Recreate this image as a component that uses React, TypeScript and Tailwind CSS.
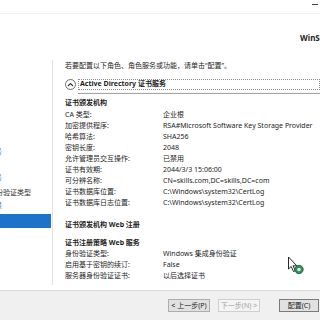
import React from 'react'

type Row = { label: string; value: string }

const caRows: Row[] = [
  { label: 'CA 类型:', value: '企业根' },
  { label: '加密提供程序:', value: 'RSA#Microsoft Software Key Storage Provider' },
  { label: '哈希算法:', value: 'SHA256' },
  { label: '密钥长度:', value: '2048' },
  { label: '允许管理员交互操作:', value: '已禁用' },
  { label: '证书有效期:', value: '2044/3/3 15:06:00' },
  { label: '可分辨名称:', value: 'CN=skills.com,DC=skills,DC=com' },
  { label: '证书数据库位置:', value: 'C:\\Windows\\system32\\CertLog' },
  { label: '证书数据库日志位置:', value: 'C:\\Windows\\system32\\CertLog' },
]

const cesRows: Row[] = [
  { label: '身份验证类型:', value: 'Windows 集成身份验证' },
  { label: '启用基于密钥的续订:', value: 'False' },
  { label: '服务器身份验证证书:', value: '以后选择证书' },
]

function DetailRow({ label, value }: Row) {
  return (
    <div className="flex h-[11px] items-center leading-[11px]">
      <div className="w-[98px] shrink-0">{label}</div>
      <div className="whitespace-nowrap">{value}</div>
    </div>
  )
}

function NavItem({ text, shift, blue }: { text: string; shift: string; blue?: boolean }) {
  return (
    <div className="h-[12px] overflow-hidden leading-[12px]">
      <div className={`whitespace-nowrap ${shift} ${blue ? 'text-[#3a7bc8]' : 'text-[#333]'}`}>{text}</div>
    </div>
  )
}

function BusyCursor() {
  return (
    <svg className="absolute left-[287px] top-[256px]" width="18" height="20" viewBox="0 0 18 20">
      <path d="M1.5 1 L1.5 13 L4.2 10.5 L6.5 15.5 L8.3 14.7 L6.1 9.8 L9.8 9.8 Z" fill="#fff" stroke="#111" strokeWidth="0.9" strokeLinejoin="round" />
      <circle cx="12" cy="13.5" r="4.2" fill="#2f8f5b" stroke="#1a5a37" strokeWidth="0.8" />
      <circle cx="12" cy="13.5" r="1.8" fill="#d7efe0" />
    </svg>
  )
}

export default function App() {
  return (
    <div
      className="relative h-[320px] w-[320px] overflow-hidden bg-white text-[7px] text-[#1e1e1e]"
      style={{ fontFamily: '"Noto Sans", "Noto Sans CJK SC", sans-serif' }}
    >
      {/* title bar */}
      <div className="flex h-[14px] justify-end border-b border-[#f0f0f0]">
        <div className="mr-[2px] mt-[4px] h-[1px] w-[6px] bg-[#444]" />
      </div>

      {/* wizard header */}
      <div className="flex h-[42px] items-end overflow-hidden pb-[13px] pl-[300px]">
        <div className="whitespace-nowrap text-[8px] font-bold leading-[10px]">WinServer</div>
      </div>

      <div className="flex h-[234px]">
        {/* left nav */}
        <div className="mb-[5px] mt-[4px] flex w-[53px] shrink-0 flex-col border-r border-[#e3e3e3] pt-[86px]">
          <NavItem text="角色服务" shift="-ml-[26px]" blue />
          <div className="h-[14px]" />
          <NavItem text="证书服务" shift="-ml-[26px]" blue />
          <div className="h-[3px]" />
          <NavItem text="身份验证类型" shift="-ml-[11px]" />
          <div className="h-[1px]" />
          <NavItem text="结果" shift="-ml-[12px]" blue />
          <div className="h-[2px]" />
          <div className="mr-[1px] h-[14px] bg-[#1b74c9]" />
        </div>

        {/* content */}
        <div className="flex min-w-0 flex-1 flex-col pl-[12px] pt-[5px]">
          <div className="h-[10px] whitespace-nowrap leading-[10px]">若要配置以下角色、角色服务或功能，请单击“配置”。</div>

          <div className="mt-[7px] flex h-[12px] items-center">
            <div className="flex h-[11px] w-[11px] shrink-0 items-center justify-center rounded-full border border-[#6e6e6e]">
              <svg width="7" height="5" viewBox="0 0 7 5">
                <path d="M1 4 L3.5 1.5 L6 4" fill="none" stroke="#333" strokeWidth="1.1" />
              </svg>
            </div>
            <div className="ml-[2px] flex h-[11px] flex-1 items-center border border-dotted border-[#8a8a8a] pl-[1px]">
              <span className="whitespace-nowrap text-[7px] font-bold leading-[10px]">Active Directory 证书服务</span>
            </div>
          </div>
          <div className="ml-[13px] mt-[3px] h-[1px] bg-[#a0a0a0]" />

          <div className="mt-[3px] h-[11px] font-bold leading-[11px]">证书颁发机构</div>
          <div className="mt-[1px]">
            {caRows.map((r) => (
              <DetailRow key={r.label} label={r.label} value={r.value} />
            ))}
          </div>

          <div className="mt-[11px] h-[11px] font-bold leading-[11px]">证书颁发机构 Web 注册</div>
          <div className="mt-[7px] h-[11px] font-bold leading-[11px]">证书注册策略 Web 服务</div>
          <div>
            {cesRows.map((r) => (
              <DetailRow key={r.label} label={r.label} value={r.value} />
            ))}
          </div>
        </div>
      </div>

      {/* footer */}
      <div className="flex h-[30px] items-center border-t border-[#dadada] bg-[#f0f0f0] pl-[168px]">
        <button className="h-[13px] w-[42px] border border-[#adadad] bg-[#e1e1e1] text-[7px] leading-[11px] text-[#1e1e1e]">
          &lt; 上一步(P)
        </button>
        <button className="ml-[8px] h-[13px] w-[42px] border border-[#cfcfcf] bg-[#f4f4f4] text-[7px] leading-[11px] text-[#a3a3a3]">
          下一步(N) &gt;
        </button>
        <button className="ml-[19px] h-[13px] w-[40px] border border-[#7a7a7a] bg-[#e1e1e1] text-[7px] leading-[11px] text-[#1e1e1e]">
          配置(C)
        </button>
      </div>

      <BusyCursor />
    </div>
  )
}
